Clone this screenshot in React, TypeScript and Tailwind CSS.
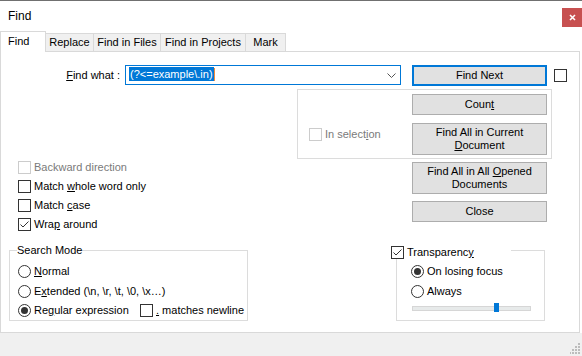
import React from 'react';

// Small Win32-style controls used by the dialog
function CheckBox({ checked = false, disabled = false }: { checked?: boolean; disabled?: boolean }) {
  return (
    <span
      className={`flex h-[13px] w-[13px] shrink-0 items-center justify-center border bg-white ${
        disabled ? 'border-[#cccccc]' : 'border-[#333333]'
      }`}
    >
      {checked && (
        <svg width="11" height="11" viewBox="0 0 11 11">
          <path d="M1.5 5.5 L4 8 L9.5 2.5" fill="none" stroke="#333333" strokeWidth="1" />
        </svg>
      )}
    </span>
  );
}

function Radio({ checked = false }: { checked?: boolean }) {
  return (
    <span className="flex h-[13px] w-[13px] shrink-0 items-center justify-center rounded-full border border-[#333333] bg-white">
      {checked && <span className="h-[7px] w-[7px] rounded-full bg-[#333333]" />}
    </span>
  );
}

function Option({
  control,
  children,
  disabled = false
}: {
  control: React.ReactNode;
  children: React.ReactNode;
  disabled?: boolean;
}) {
  return (
    <div className="flex h-[13px] items-center gap-[3px] whitespace-nowrap leading-[13px]">
      {control}
      <span className={disabled ? 'text-[#7a7a7a]' : 'text-black'}>{children}</span>
    </div>
  );
}

function Button({
  children,
  tall = false,
  primary = false,
  className = ''
}: {
  children: React.ReactNode;
  tall?: boolean;
  primary?: boolean;
  className?: string;
}) {
  return (
    <div
      className={`flex w-[135px] shrink-0 flex-col items-center justify-center bg-[#e1e1e1] text-center leading-[13px] ${
        tall ? 'h-[32px]' : 'h-[21px]'
      } ${primary ? 'border-2 border-[#0078d7]' : 'border border-[#adadad]'} ${className}`}
    >
      {children}
    </div>
  );
}

const U = ({ children }: { children: React.ReactNode }) => (
  <span className="underline underline-offset-1">{children}</span>
);

const TABS = [
  { label: 'Replace', w: 'w-[48px]' },
  { label: 'Find in Files', w: 'w-[67px]' },
  { label: 'Find in Projects', w: 'w-[85px]' },
  { label: 'Mark', w: 'w-[40px]' }
];

export default function App() {
  return (
    <div className="relative flex h-[356px] w-[582px] flex-col overflow-hidden bg-white font-['Liberation_Sans',Arial,sans-serif] text-[11px] text-black">
      {/* Title bar */}
      <div className="flex h-[31px] shrink-0 items-start border-t border-[#707070]">
        <div className="pl-[8px] pt-[7px] text-[12px] leading-[16px]">Find</div>
        <div className="ml-auto mt-[7px] flex h-[19px] w-[20px] items-center justify-center bg-[#c75050]">
          <svg width="7" height="7" viewBox="0 0 7 7">
            <path d="M1 1 L6 6 M6 1 L1 6" stroke="#ffffff" strokeWidth="1.6" />
          </svg>
        </div>
      </div>

      {/* Tabs */}
      <div className="flex h-[20px] shrink-0 items-end">
        <div className="relative z-10 -mb-[1px] flex h-[21px] w-[46px] items-start border border-b-0 border-[#d9d9d9] bg-white pl-[7px] pt-[3px] leading-[13px]">
          Find
        </div>
        {TABS.map((t) => (
          <div
            key={t.label}
            className={`flex h-[18px] items-center justify-center border-t border-r border-[#d9d9d9] bg-[#f0f0f0] leading-[13px] ${t.w}`}
          >
            {t.label}
          </div>
        ))}
      </div>

      {/* Tab panel */}
      <div className="flex h-[282px] w-[580px] shrink-0 flex-col border border-[#d9d9d9] bg-white">
        {/* Find what row */}
        <div className="mt-[13px] flex items-start">
          <div className="flex h-[20px] w-[120px] items-center justify-end pr-[1px]">
            <span>
              <U>F</U>ind what :
            </span>
          </div>
          <div className="ml-[4px] flex h-[20px] w-[276px] items-start border border-[#0078d7] bg-white pl-[3px] pt-[1px]">
            <span className="h-[14px] bg-[#0078d7] px-[1px] leading-[14px] text-white">{'(?<=example\\.in)'}</span>
            <span className="mt-[1px] h-[13px] w-[1px] bg-[#f08a3c]" />
            <svg className="ml-auto mr-[4px] mt-[6px]" width="9" height="5" viewBox="0 0 9 5">
              <path d="M0.5 0.5 L4.5 4.5 L8.5 0.5" fill="none" stroke="#555555" strokeWidth="1" />
            </svg>
          </div>
          <Button primary className="ml-[11px]">
            Find Next
          </Button>
          <div className="ml-[7px] mt-[4px]">
            <CheckBox />
          </div>
        </div>

        {/* Middle area */}
        <div className="mt-[3px] flex">
          <div className="flex w-[296px] flex-col gap-[6px] pl-[17px] pt-[72px]">
            <Option control={<CheckBox disabled />} disabled>
              Backward direction
            </Option>
            <Option control={<CheckBox />}>
              Match <U>w</U>hole word only
            </Option>
            <Option control={<CheckBox />}>
              Match <U>c</U>ase
            </Option>
            <Option control={<CheckBox checked />}>
              Wra<U>p</U> around
            </Option>
          </div>

          <div className="flex w-[255px] flex-col">
            <div className="flex h-[70px] border border-[#dcdcdc]">
              <div className="w-[114px] pl-[11px] pt-[38px]">
                <Option control={<CheckBox disabled />} disabled>
                  In select<U>i</U>on
                </Option>
              </div>
              <div className="flex flex-col gap-[8px] pt-[4px]">
                <Button>
                  <span>
                    Coun<U>t</U>
                  </span>
                </Button>
                <Button tall>
                  <span>Find All in Current</span>
                  <span>
                    <U>D</U>ocument
                  </span>
                </Button>
              </div>
            </div>
            <Button tall className="ml-[115px] mt-[3px]">
              <span>
                Find All in All <U>O</U>pened
              </span>
              <span>Documents</span>
            </Button>
            <Button className="ml-[115px] mt-[7px]">Close</Button>
          </div>
        </div>

        {/* Bottom groups */}
        <div className="mt-[19px] flex">
          <div className="relative ml-[8px] h-[71px] w-[239px] border border-[#dcdcdc] pl-[8px] pt-[14px]">
            <div className="absolute -top-[7px] left-[7px] bg-white px-[0px] leading-[13px]">Search Mode</div>
            <Option control={<Radio />}>
              <U>N</U>ormal
            </Option>
            <div className="mt-[7px]">
              <Option control={<Radio />}>
                E<U>x</U>tended {'(\\n, \\r, \\t, \\0, \\x\u2026)'}
              </Option>
            </div>
            <div className="mt-[6px] flex">
              <div className="w-[122px]">
                <Option control={<Radio checked />}>
                  Re<U>g</U>ular expression
                </Option>
              </div>
              <Option control={<CheckBox />}>
                <U>.</U> matches newline
              </Option>
            </div>
          </div>

          <div className="relative ml-[148px] h-[71px] w-[149px] border border-[#dcdcdc] pl-[14px] pt-[14px]">
            <div className="absolute -top-[5px] -left-[6px] flex w-[120px] items-center gap-[3px] bg-white leading-[13px]">
              <CheckBox checked />
              <span>
                Transparenc<U>y</U>
              </span>
            </div>
            <Option control={<Radio checked />}>On losing focus</Option>
            <div className="mt-[7px]">
              <Option control={<Radio />}>Always</Option>
            </div>
            <div className="relative ml-[1px] mt-[8px] h-[5px] w-[119px] border border-[#d6d6d6] bg-[#e7eaea]">
              <div className="absolute -top-[4px] left-[81px] h-[9px] w-[5px] bg-[#0078d7]" />
            </div>
          </div>
        </div>
      </div>

      {/* Footer with size grip */}
      <div className="relative flex-1 bg-[#f0f0f0]">
        <svg className="absolute bottom-[2px] right-[1px]" width="11" height="11" viewBox="0 0 11 11">
          <g fill="#bcbcbc">
            <rect x="8" y="0" width="2" height="2" />
            <rect x="5" y="3" width="2" height="2" />
            <rect x="8" y="3" width="2" height="2" />
            <rect x="2" y="6" width="2" height="2" />
            <rect x="5" y="6" width="2" height="2" />
            <rect x="8" y="6" width="2" height="2" />
            <rect x="-1" y="9" width="2" height="2" />
            <rect x="2" y="9" width="2" height="2" />
            <rect x="5" y="9" width="2" height="2" />
            <rect x="8" y="9" width="2" height="2" />
          </g>
        </svg>
      </div>
    </div>
  );
}
